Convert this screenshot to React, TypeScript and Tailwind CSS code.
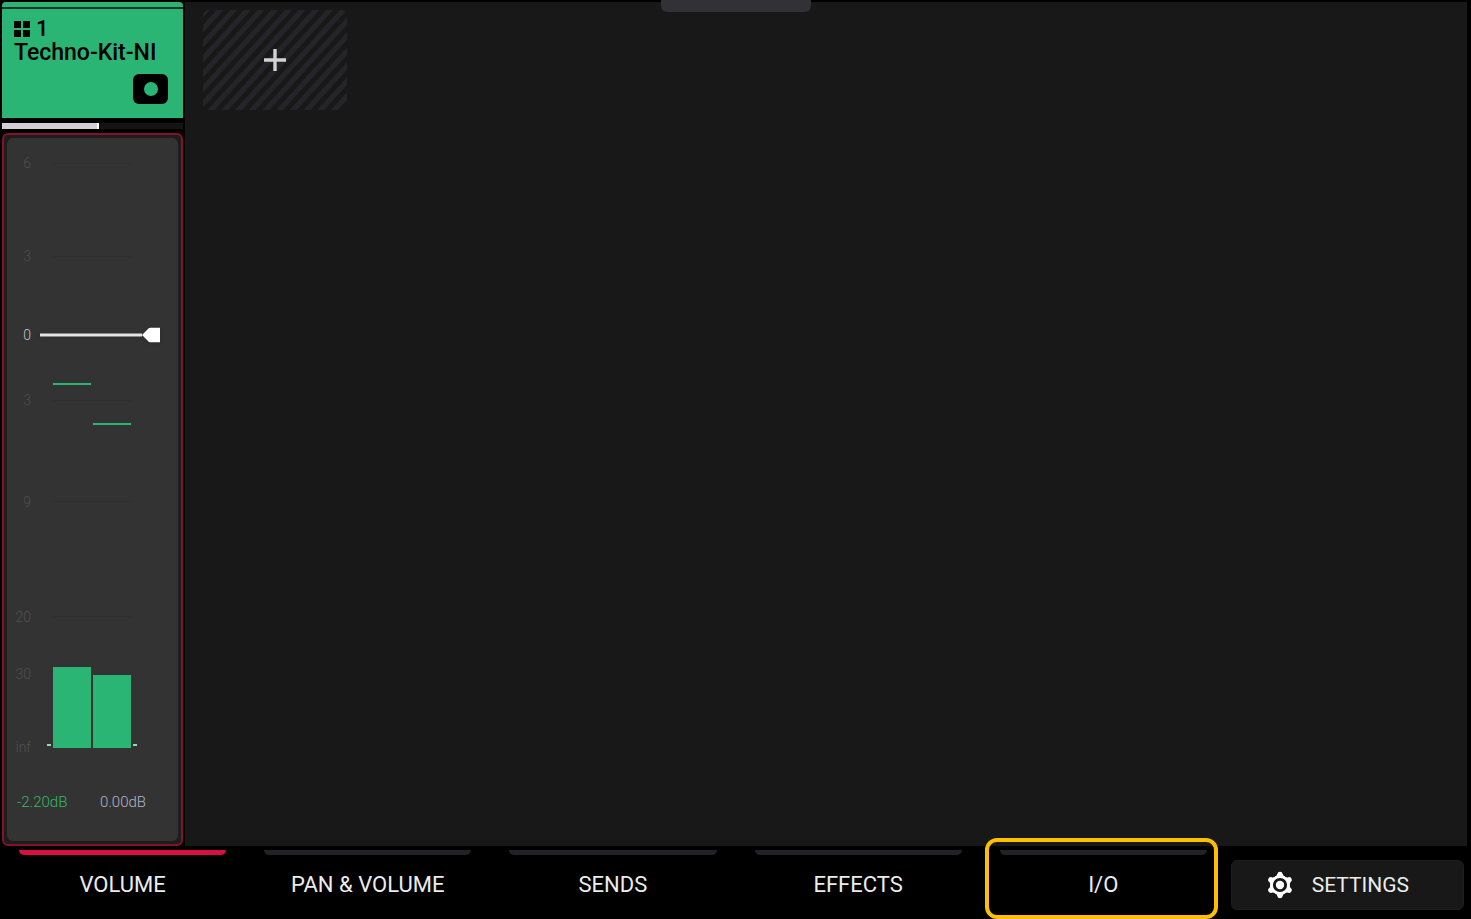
import React, { useState } from 'react';

const SCALE = [
  { label: '6', top: 0, line: true },
  { label: '3', top: 16, line: true },
  { label: '0', top: 29.4, line: false },
  { label: '3', top: 40.6, line: true },
  { label: '9', top: 58, line: true },
  { label: '20', top: 77.7, line: true },
  { label: '30', top: 87.5, line: false },
  { label: 'inf', top: 100, line: false },
];

const METERS = [
  { id: 'left', level: 13.8, peak: 62.1 },
  { id: 'right', level: 12.4, peak: 55.2 },
];

const TABS = ['VOLUME', 'PAN & VOLUME', 'SENDS', 'EFFECTS', 'I/O'];

const GearIcon = () => (
  <svg viewBox="-14 -14 28 28" className="h-7 w-7 shrink-0" aria-hidden="true">
    {[0, 60, 120, 180, 240, 300].map((angle) => (
      <path
        key={angle}
        d="M-5.2 -8 Q-2.6 -9.4 -2.6 -11.2 Q-2.4 -13.2 0 -13.2 Q2.4 -13.2 2.6 -11.2 Q2.6 -9.4 5.2 -8 Z"
        fill="#fff"
        transform={`rotate(${angle})`}
      />
    ))}
    <circle r="8.5" fill="#181818" stroke="#fff" strokeWidth="2.8" />
    <circle r="4.2" fill="#fff" />
  </svg>
);

const TrackHeader = () => (
  <div>
    <div className="rounded-t bg-[#22302c] pb-[2px]">
      <div className="h-[5px] rounded-t bg-[#2bb574]" />
    </div>
    <div className="flex h-[109px] flex-col bg-[#2bb574] pt-2 pr-[15px] pl-3 text-black">
      <div className="flex h-6 items-center gap-[6px]">
        <svg viewBox="0 0 16 16" className="h-4 w-4" aria-hidden="true">
          <path d="M0 0h7v7H0zM9 0h7v7H9zM0 9h7v7H0zM9 9h7v7H9z" />
        </svg>
        <span className="text-[22px] leading-6 font-medium">1</span>
      </div>
      <h1 className="text-[23px] leading-6 font-medium whitespace-nowrap">Techno-Kit-NI</h1>
      <button
        aria-label="Record arm"
        className="mt-[9px] flex h-[30px] w-[35px] items-center justify-center self-end rounded-md bg-black"
      >
        <span className="h-[14px] w-[14px] rounded-full bg-[#2bb574]" />
      </button>
    </div>
    {/* Pan position */}
    <div className="mt-[5px] h-[6px] bg-[#141414]">
      <div className="h-full w-[97px] border-r-2 border-white bg-[#d3ced6]" />
    </div>
  </div>
);

const Fader = () => {
  const [position, setPosition] = useState(706);

  return (
    <div className="flex flex-1 flex-col rounded-md border-2 border-[#86102f] bg-[#1d1d1d] p-[3px]">
      <div className="flex flex-1 flex-col rounded-md bg-[#333333] pt-[25px]">
        <div className="relative flex-1">
          {SCALE.map((mark) => (
            <div
              key={mark.top}
              className="absolute left-0 flex h-4 w-full -translate-y-1/2 items-center"
              style={{ top: `${mark.top}%` }}
            >
              <span
                className={
                  mark.label === '0'
                    ? 'w-6 text-right text-[14px] leading-4 font-light text-[#c4c4c4]'
                    : 'w-6 text-right text-[14px] leading-4 font-light text-[#505050]'
                }
              >
                {mark.label}
              </span>
              {mark.line && <span className="ml-[22px] h-px w-[78px] bg-[#2f2f32]" />}
            </div>
          ))}

          {/* Stereo meters with held peaks */}
          <div className="absolute top-0 -bottom-px left-10 flex items-end gap-[2px]">
            <span className="mb-[2px] h-[2px] w-1 bg-[#93d8b5]" />
            {METERS.map((meter) => (
              <div key={meter.id} className="relative h-full w-[38px]">
                <div
                  className="absolute bottom-0 w-full bg-[#2bb574]"
                  style={{ height: `${meter.level}%` }}
                />
                <div
                  className="absolute h-[2px] w-full bg-[#2bb574]"
                  style={{ bottom: `${meter.peak}%` }}
                />
              </div>
            ))}
            <span className="mb-[2px] h-[2px] w-1 bg-[#93d8b5]" />
          </div>

          <div
            className="absolute left-[33px] flex w-[120px] translate-y-1/2 items-center drop-shadow-sm"
            style={{ bottom: `${position / 10}%` }}
          >
            <span className="h-[3px] flex-1 bg-[#e4e4e4]" />
            <svg viewBox="0 0 18 15" className="h-[15px] w-[18px]" aria-hidden="true">
              <path d="M0 7.5 L7 0.5 Q8 0 9 0 H18 V15 H9 Q8 15 7 14.5 Z" fill="#fff" />
            </svg>
          </div>
          <input
            type="range"
            min={0}
            max={1000}
            value={position}
            onChange={(e) => setPosition(Number(e.target.value))}
            aria-label="Track volume"
            className="absolute inset-y-0 right-2 w-10 cursor-pointer opacity-0 [direction:rtl] [writing-mode:vertical-lr]"
          />
        </div>
        <div className="mt-[45px] mb-[29px] flex h-5 justify-between pr-8 pl-[10px] text-[15px] leading-5 font-light">
          <output className="text-[#35b866]">-2.20dB</output>
          <output className="text-[#b4b2c4]">0.00dB</output>
        </div>
      </div>
    </div>
  );
};

const App = () => {
  const [active, setActive] = useState('VOLUME');

  return (
    <div className="flex min-h-screen flex-col bg-black font-['Roboto',sans-serif] text-[#ececec]">
      <div className="relative flex flex-1 gap-[2px] pt-[2px] pr-1 pl-[2px]">
        <aside className="flex w-[181px] shrink-0 flex-col gap-1">
          <TrackHeader />
          <Fader />
        </aside>
        <main className="flex-1 bg-[#181818] px-[18px] py-2">
          <button
            aria-label="Add track"
            className="relative flex h-[100px] w-36 items-center justify-center overflow-hidden rounded-md"
          >
            <svg className="absolute inset-0 h-full w-full" aria-hidden="true">
              <defs>
                <pattern
                  id="stripes"
                  width="13.7"
                  height="15"
                  patternUnits="userSpaceOnUse"
                >
                  <path
                    d="M-13.7 15 L0 0 H6.8 L-6.9 15 Z M0 15 L13.7 0 H20.5 L6.8 15 Z"
                    fill="#252529"
                  />
                </pattern>
              </defs>
              <rect width="100%" height="100%" fill="url(#stripes)" />
            </svg>
            <svg viewBox="0 0 22 22" className="relative h-[22px] w-[22px]" aria-hidden="true">
              <path d="M9.3 0h3.4v9.3H22v3.4h-9.3V22H9.3v-9.3H0V9.3h9.3z" fill="#d2d2d4" />
            </svg>
          </button>
        </main>
        {/* Pull-down handle */}
        <div className="absolute top-0 left-1/2 h-3 w-[150px] -translate-x-1/2 rounded-b-md bg-[#323136]" />
      </div>

      <nav aria-label="Mixer views" className="grid h-[73px] grid-cols-6">
        {TABS.map((tab) => (
          <button
            key={tab}
            onClick={() => setActive(tab)}
            aria-pressed={active === tab}
            className="relative flex flex-col px-[19px] pt-1"
          >
            <span
              className={
                active === tab
                  ? 'h-[5px] w-full rounded-b-md bg-[#d90f43]'
                  : 'h-[5px] w-full rounded-b-md bg-[#232326]'
              }
            />
            <span className="mt-[18px] w-full text-center text-[22px] leading-6 whitespace-nowrap">
              {tab}
            </span>
            {tab === 'I/O' && (
              <span className="absolute -top-2 right-2 bottom-0 left-1 rounded-xl border-4 border-[#fdc000]" />
            )}
          </button>
        ))}
        <div className="pt-[14px] pr-[7px] pb-[9px] pl-[5px]">
          <button className="flex h-full w-full items-center justify-center gap-[18px] rounded-md border border-[#1e1e1e] bg-[#181818] pr-5">
            <GearIcon />
            <span className="text-[21px] leading-6">SETTINGS</span>
          </button>
        </div>
      </nav>
    </div>
  );
};

export default App;
